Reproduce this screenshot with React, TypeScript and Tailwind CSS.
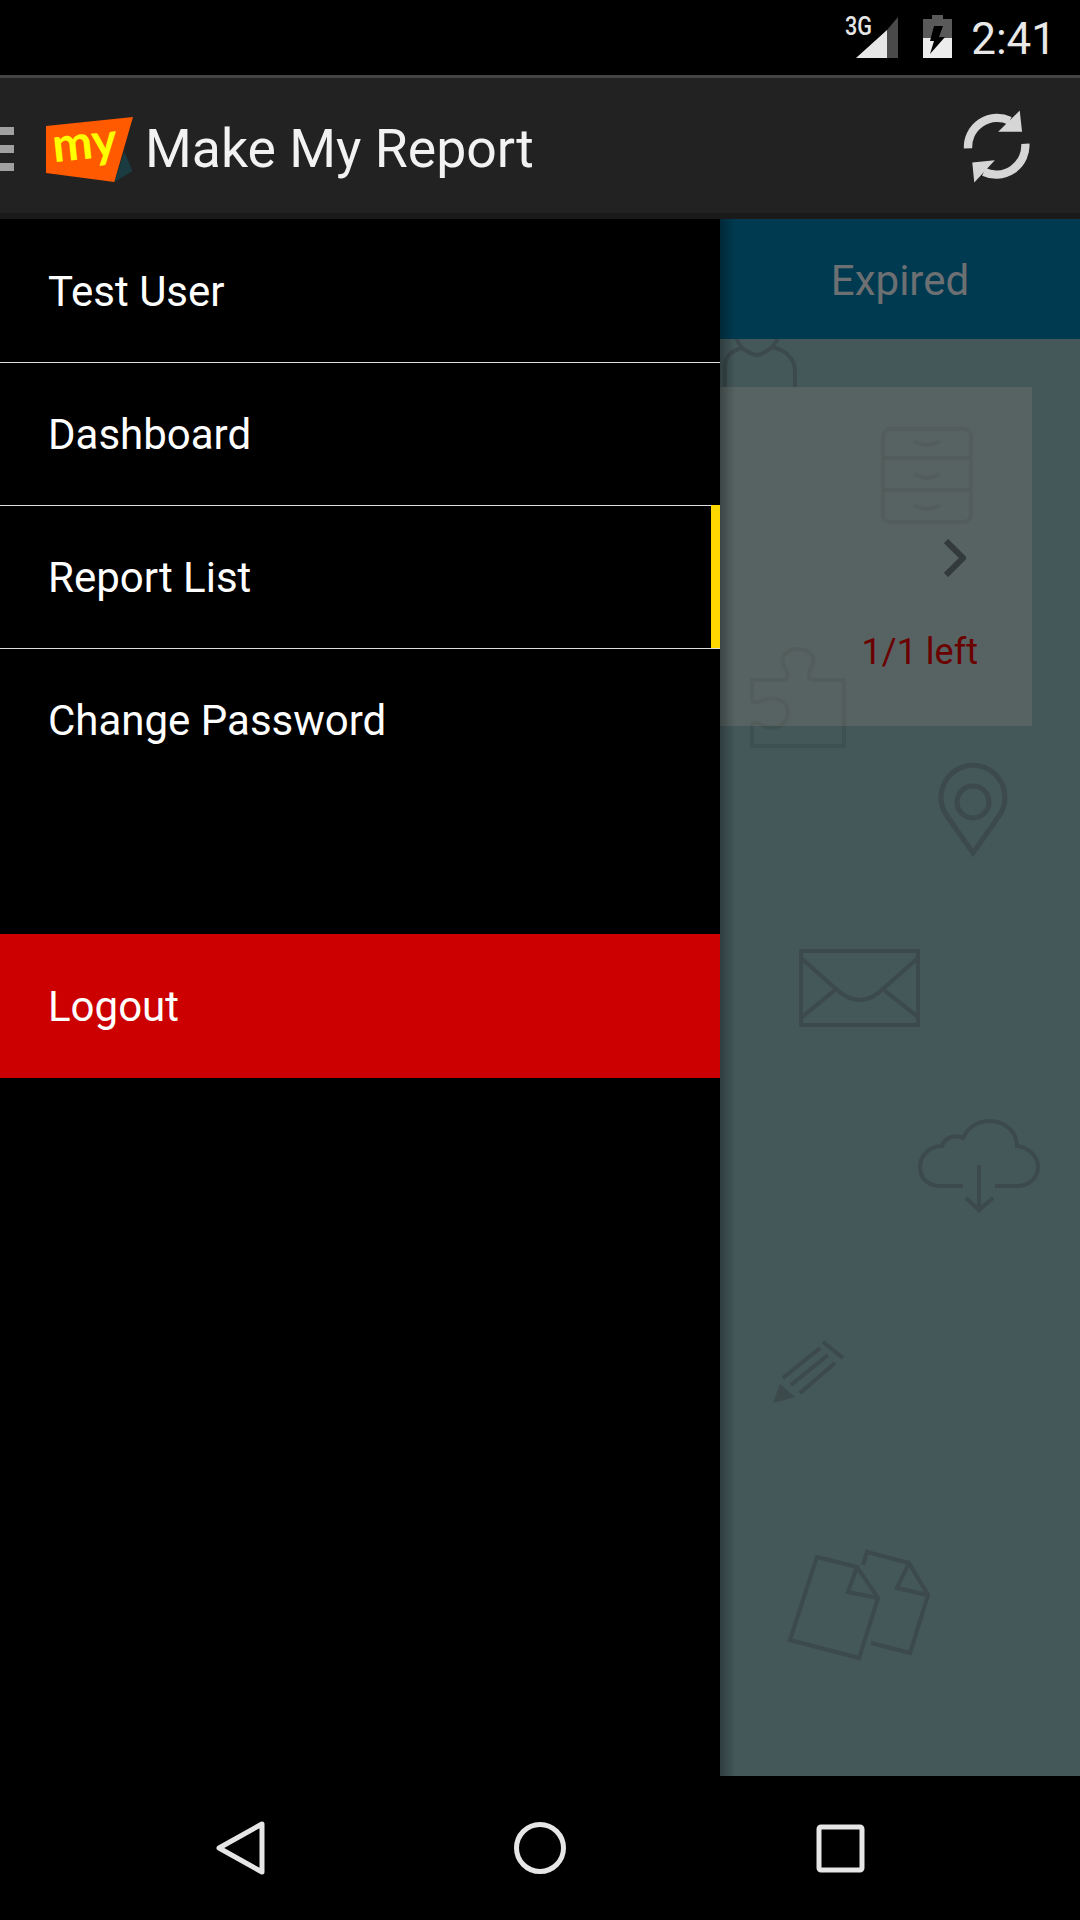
const menuItems = [
  { label: "Test User", divider: false },
  { label: "Dashboard", divider: true },
  { label: "Report List", divider: true, active: true },
  { label: "Change Password", divider: true },
];

function StatusBar() {
  return (
    <div className="flex h-[75px] shrink-0 items-start justify-end bg-black">
      <svg width="60" height="50" viewBox="845 12 60 50" className="mt-[12px]">
        <path d="M856 58 L887 30 V58 Z" fill="#e6e6e6" />
        <path d="M887 30 L898 17 V58 H887 Z" fill="#4a4a4a" />
        <text x="845" y="35" fontSize="25" fontWeight="500" fill="#e6e6e6" fontFamily="Roboto, sans-serif" textLength="27" lengthAdjust="spacingAndGlyphs">
          3G
        </text>
      </svg>
      <svg width="29" height="43" viewBox="923 15 29 43" className="ml-[18px] mt-[15px]">
        <path d="M932 15 H943 V19 H952 V38 H923 V19 H932 Z" fill="#5a5a5a" />
        <rect x="923" y="38" width="29" height="20" fill="#ececec" />
        <path d="M934 26 L943 26 L939 37 L945 37 L930 54 L934 41 L930 41 Z" fill="#000" />
      </svg>
      <span className="ml-[19px] mr-[24px] mt-[14px] font-['Roboto',sans-serif] text-[44px] leading-[50px] text-[#e8e8e8]">2:41</span>
    </div>
  );
}

function Logo() {
  return (
    <div className="relative h-[65px] w-[87px] shrink-0">
      <svg width="87" height="65" viewBox="138 138 260 194">
        <path d="M372 240 L396 300 L342 332 Z" fill="#1a3c40" />
        <path d="M138 165 L398 138 L342 332 L138 305 Z" fill="#ff5a00" />
      </svg>
      <span className="absolute left-[6px] top-0 -rotate-6 font-['Lato',sans-serif] text-[48px] font-bold leading-none text-[#ffff00]">my</span>
    </div>
  );
}

function SyncIcon() {
  return (
    <svg width="73" height="80" viewBox="540 320 220 240" fill="none" className="shrink-0">
      <path d="M564 447 A88 88 0 0 1 690 364" stroke="#d6d6d6" strokeWidth="25" />
      <path d="M720 333 L727 397 L655 397 Z" fill="#d6d6d6" />
      <path d="M737 433 A88 88 0 0 1 612 518" stroke="#d6d6d6" strokeWidth="25" />
      <path d="M577 490 L645 483 L583 550 Z" fill="#d6d6d6" />
    </svg>
  );
}

function Toolbar() {
  return (
    <div className="flex h-[138px] shrink-0 items-center border-t-[3px] border-[#444444] bg-[#222222]">
      <div className="mt-[7px] flex w-[14px] shrink-0 flex-col gap-[10px]">
        <div className="h-[8px] bg-[#a0a0a0]" />
        <div className="h-[8px] bg-[#a0a0a0]" />
        <div className="h-[8px] bg-[#a0a0a0]" />
      </div>
      <div className="ml-[32px] mt-[7px]">
        <Logo />
      </div>
      <span className="ml-[12px] mt-[7px] font-['Roboto',sans-serif] text-[53.6px] leading-none text-[#f2f2f2]">Make My Report</span>
      <div className="ml-auto mr-[47px]">
        <SyncIcon />
      </div>
    </div>
  );
}

function Drawer() {
  return (
    <div className="w-[720px] shrink-0 bg-black font-['Roboto',sans-serif] text-[42px] text-white">
      {menuItems.map((item) => (
        <div
          key={item.label}
          className={
            item.divider
              ? "relative flex h-[143px] items-center border-t border-[#dddddd] pl-[48px]"
              : "relative flex h-[143px] items-center pl-[48px] pt-[2px]"
          }
        >
          {item.label}
          {item.active && <div className="absolute -top-[1px] bottom-0 right-0 w-[9px] bg-[#ffd800]" />}
        </div>
      ))}
      <div className="mt-[143px] flex h-[144px] items-center bg-[#cc0000] pl-[48px]">Logout</div>
    </div>
  );
}

// faint line drawings printed on the wallpaper, in page coordinates
function Wallpaper() {
  return (
    <svg
      className="absolute left-0 top-0 blur-[0.6px]"
      width="360"
      height="1557"
      viewBox="720 219 360 1557"
      fill="none"
      stroke="#3c4a4b"
      strokeWidth="4"
    >
      <path d="M725 387 V366 C725 356 733 350 742 348 C748 352 752 355 757 355 C762 355 767 351 772 347 C785 350 795 358 795 372 V387 M736 339 L742 348 M778 339 L772 347" />
      <g strokeOpacity="0.55">
        <rect x="883" y="429" width="88" height="93" rx="7" />
        <path d="M883 458 H971 M883 490 H971 M914 441 Q927 449 940 441 M914 474 Q927 482 940 474 M914 505 Q927 513 940 505" />
        <path d="M752 680 H782 C790 680 788 673 785 668 C778 656 788 649 798 649 C808 649 818 656 811 668 C808 673 806 680 815 680 H844 V746 H752 V726 C752 720 758 723 764 726 C778 731 788 723 788 712 C788 700 775 696 764 700 C758 702 752 705 752 699 Z" />
      </g>
      <path d="M973 853 L947 816 A32 32 0 1 1 999 816 Z" strokeWidth="5" />
      <circle cx="973" cy="802" r="16" strokeWidth="5" />
      <rect x="801" y="951" width="117" height="74" />
      <path d="M801 958 L835 988 Q860 1012 884 988 L918 958 M802 1017 L835 990 M884 990 L918 1017" />
      <path d="M963 1186 H940 C928 1186 920 1178 920 1167 C920 1155 930 1146 942 1146 C945 1137 955 1134 963 1138 C968 1127 978 1121 990 1121 C1005 1121 1017 1132 1017 1146 C1029 1148 1038 1156 1038 1167 C1038 1178 1029 1186 1017 1186 H995 M979 1165 V1210 M966 1198 L979 1210 L993 1198" />
      <path d="M783 1378 L820 1348 M791 1385 L828 1355 M800 1393 L835 1363 M823 1342 L843 1358" />
      <path d="M773 1403 L780 1384 L795 1397 Z" fill="#3c4a4b" stroke="none" />
      <path d="M817 1557 L857 1567 L878 1598 L859 1658 L790 1640 Z M857 1567 L848 1592 L878 1598" />
      <path d="M863 1565 L867 1552 L909 1563 L928 1595 L910 1653 L871 1643 M909 1563 L897 1588 L928 1595" />
    </svg>
  );
}

function Content() {
  return (
    <div className="relative flex flex-1 flex-col overflow-hidden bg-[#445759] font-['Roboto',sans-serif]">
      <Wallpaper />
      <div className="relative flex h-[120px] shrink-0 items-center justify-center bg-[#003a50] pt-[2px] text-[42px] text-[#6d7072]">Expired</div>
      <div className="relative mt-[48px] flex h-[339px] w-[312px] flex-col items-end bg-[#808078]/30">
        <svg width="22" height="38" viewBox="0 0 22 38" fill="none" stroke="#333a3b" strokeWidth="6" className="mr-[66px] mt-[152px]">
          <path d="M2 2 L19 19 L2 36" />
        </svg>
        <span className="mr-[54px] mt-[54px] text-[36px] leading-[42px] text-[#6b0000]">1/1 left</span>
      </div>
      <div className="absolute bottom-0 left-0 top-0 w-[15px] bg-gradient-to-r from-black/30 to-transparent" />
    </div>
  );
}

function NavBar() {
  return (
    <div className="h-[144px] shrink-0 bg-black">
      <svg width="1080" height="144" viewBox="0 1776 1080 144" fill="none" stroke="#e6e6e6" strokeWidth="5" strokeLinejoin="round">
        <path d="M262 1824 V1872 L219 1848 Z" />
        <circle cx="540" cy="1848" r="23.5" />
        <rect x="819" y="1827" width="43" height="43" rx="2" />
      </svg>
    </div>
  );
}

export default function App() {
  return (
    <div className="flex h-[1920px] w-[1080px] flex-col overflow-hidden bg-black">
      <StatusBar />
      <Toolbar />
      <div className="h-[6px] shrink-0 bg-[#1a1a1a]" />
      <div className="flex min-h-0 flex-1">
        <Drawer />
        <Content />
      </div>
      <NavBar />
    </div>
  );
}
